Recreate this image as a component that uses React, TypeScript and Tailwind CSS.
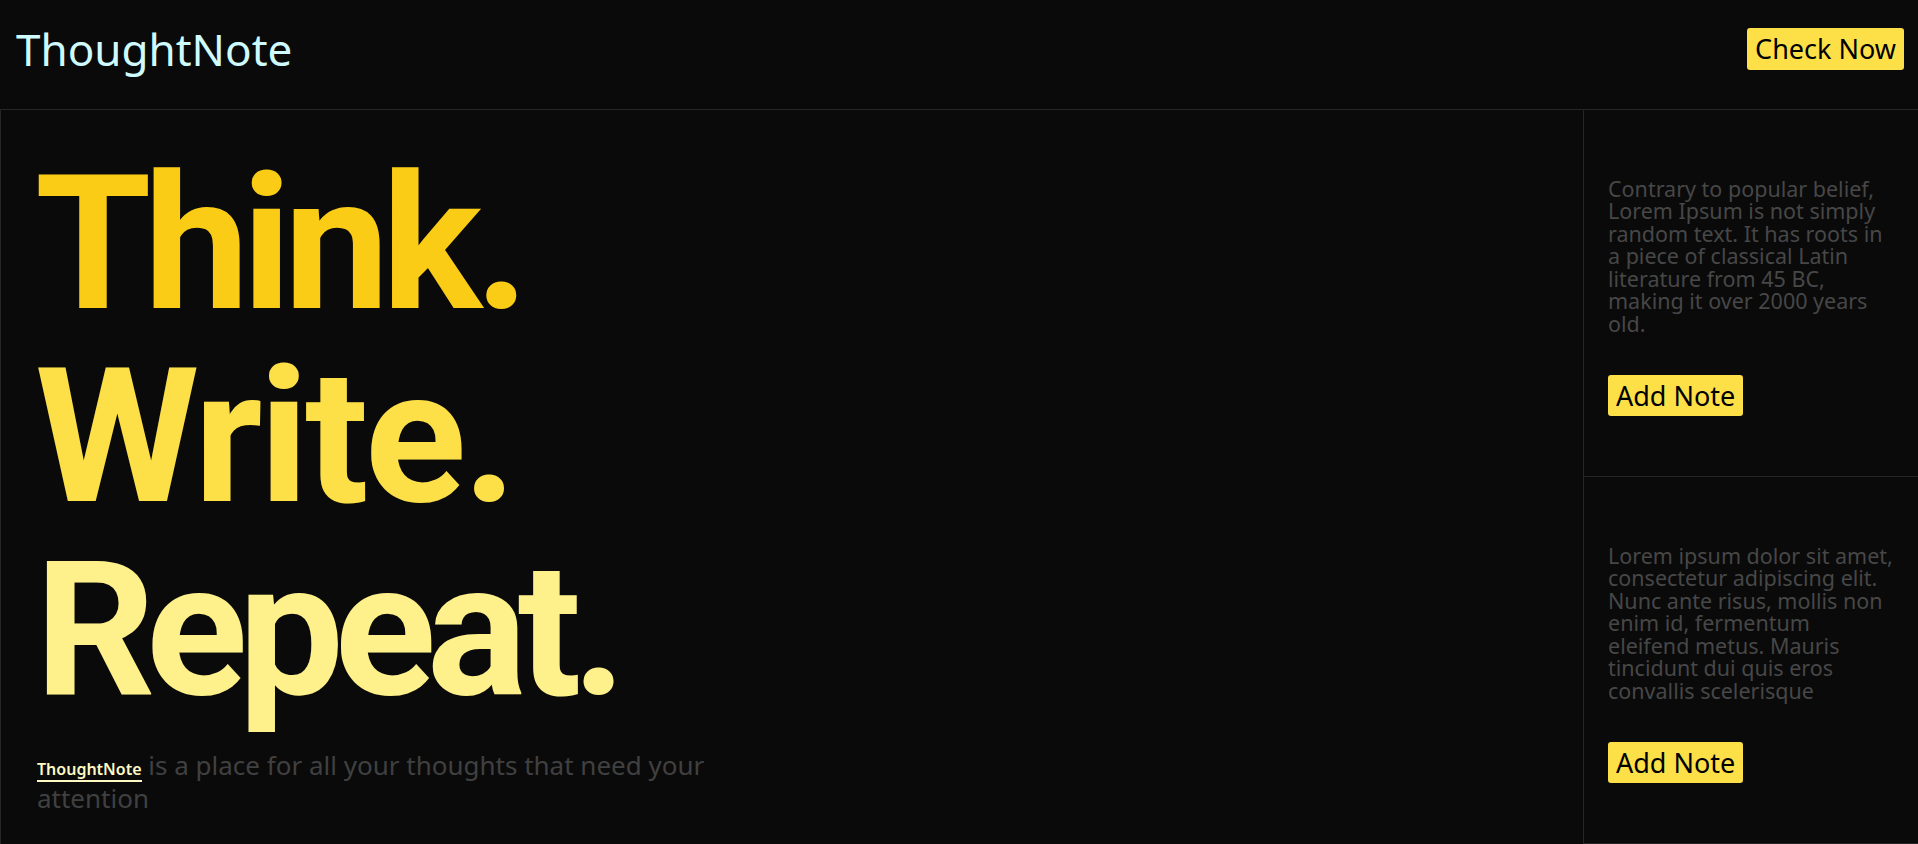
import React from "react";

const notes = [
  {
    id: "1",
    text: "Contrary to popular belief, Lorem Ipsum is not simply random text. It has roots in a piece of classical Latin literature from 45 BC, making it over 2000 years old.",
  },
  {
    id: "2",
    text: "Lorem ipsum dolor sit amet, consectetur adipiscing elit. Nunc ante risus, mollis non enim id, fermentum eleifend metus. Mauris tincidunt dui quis eros convallis scelerisque",
  },
];

export default function App() {
  return (
    <div className="min-h-screen bg-[#0a0a0a] font-['Noto_Sans',sans-serif]">
      {/* Header */}
      <header className="flex h-[110px] items-center justify-between border-b border-[#262626] pb-3 pl-4 pr-[14px]">
        <div className="text-[44px] leading-none text-[#cffafe]">ThoughtNote</div>
        <button className="h-[42px] rounded-[3px] bg-[#fde047] px-2 text-[27px] leading-none text-black">
          Check Now
        </button>
      </header>

      <main className="flex">
        {/* Hero */}
        <section className="flex-1 border-l border-[#262626] pl-[34px] pt-[38px]">
          <h1 className="font-['Roboto',sans-serif] text-[188px] font-bold leading-[193px]">
            <div className="tracking-[-0.04em] text-[#facc15]">Think.</div>
            <div className="tracking-[-0.02em] text-[#fde047]">Write.</div>
            <div className="tracking-[-0.05em] text-[#fef08a]">Repeat.</div>
          </h1>
          <p className="mt-[22px] max-w-[680px] pl-[2px] text-[26px] leading-[33px] text-[#404040]">
            <span className="border-b-2 border-[#fef9c3] text-base font-semibold text-[#fef9c3]">ThoughtNote</span>{" "}
            is a place for all your thoughts that need your attention
          </p>
        </section>

        {/* Sidebar */}
        <aside className="w-[335px] border-l border-[#262626]">
          {notes.map((n) => (
            <div key={n.id} className="flex h-[367px] flex-col justify-center gap-10 border-b border-[#262626] px-6 pt-2">
              <p className="text-[21.5px] leading-[22.5px] text-[#474747]">{n.text}</p>
              <div>
                <button className="h-[41px] rounded-[3px] bg-[#fde047] px-2 text-[27px] leading-none text-black">
                  Add Note
                </button>
              </div>
            </div>
          ))}
        </aside>
      </main>
    </div>
  );
}
